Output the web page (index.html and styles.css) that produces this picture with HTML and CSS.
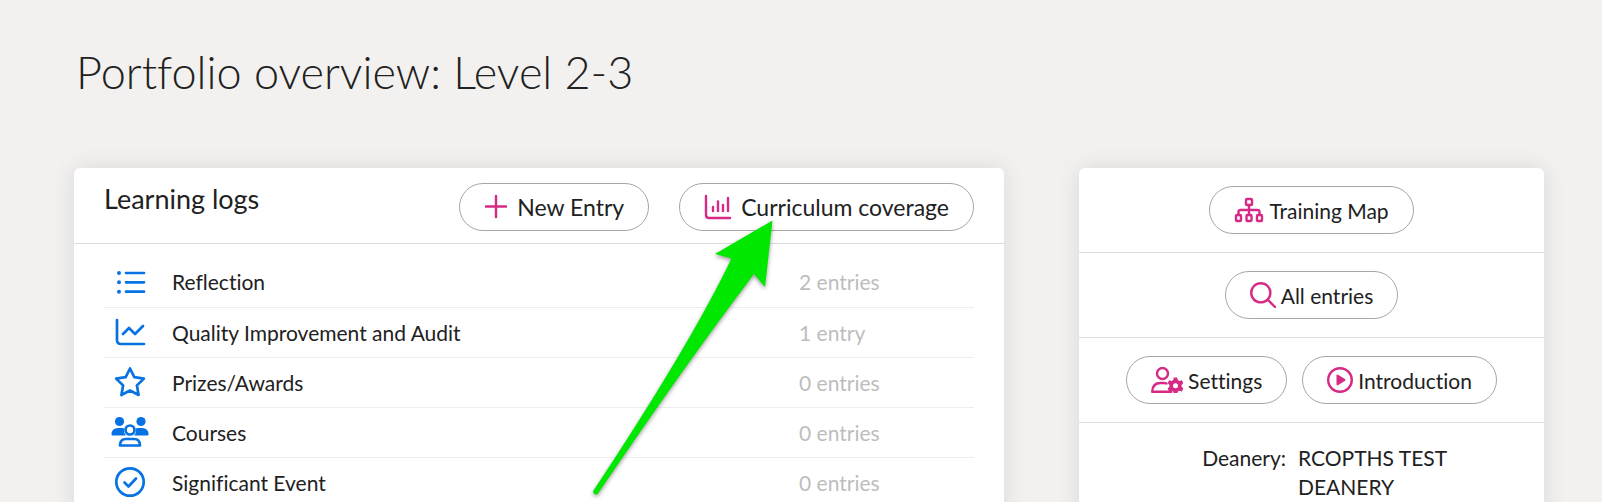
FILE: index.html
```
<!doctype html>
<html lang="en">
<head>
<meta charset="UTF-8">
<meta name="viewport" content="width=device-width, initial-scale=1.0">
<title>Portfolio overview</title>
<link rel="stylesheet" href="styles.css">
</head>
<body>
<div class="page">
<h1>Portfolio overview: Level 2-3</h1>
<div class="columns">
<main class="card">
<div class="card-header">
<h2>Learning logs</h2>
<div class="actions">
<button class="pill pill-wide" type="button">
<svg width="24" height="26" viewBox="0 0 24 26"><path d="M12 2v21M2 12.500h20"/></svg>
New Entry
</button>
<button class="pill pill-wide" type="button">
<svg width="28" height="26" viewBox="0 0 28 26"><path d="M2 2v19q0 3 3 3h21M9 13v4M14 7.500v9.500M19 11v6M24 4v13"/></svg>
Curriculum coverage
</button>
</div>
</div>
<table class="logs">
<tr>
<td class="log-icon"><svg width="36" height="32" viewBox="0 0 36 32"><path d="M14 7h18M14 16.300h18M14 25.700h18"/><path class="dots" d="M7 7h0M7 16.300h0M7 25.700h0"/></svg></td>
<td>Reflection</td>
<td class="log-count">2 entries</td>
</tr>
<tr>
<td class="log-icon"><svg width="36" height="32" viewBox="0 0 36 32"><path d="M5 4v20q0 4 4 4h23M11 18l6-6 6 6 8-8"/></svg></td>
<td>Quality Improvement and Audit</td>
<td class="log-count">1 entry</td>
</tr>
<tr>
<td class="log-icon"><svg width="36" height="32" viewBox="0 0 36 32"><path d="M18 2.500l4.300 8.700 9.600 1.400-7 6.800 1.700 9.600-8.600-4.500-8.600 4.500 1.700-9.600-7-6.800 9.600-1.400z"/></svg></td>
<td>Prizes/Awards</td>
<td class="log-count">0 entries</td>
</tr>
<tr>
<td class="log-icon"><svg width="36" height="32" viewBox="1 0 36 32"><g class="solid"><circle cx="8.500" cy="5.500" r="4.600"/><circle cx="30" cy="5.500" r="4.600"/><path d="M.5 18.500q0-6.500 6.500-6.500h4q1.500 0 2.300.5-1 4 1.700 7H1.500q-1 0-1-1zM37.500 18.500q0-6.500-6.500-6.500h-4q-1.500 0-2.300.5 1 4-1.700 7h13.500q1 0 1-1z"/></g><circle cx="19" cy="14" r="4.500"/><path d="M9 29.500q0-6.500 6-6.500h8q6 0 6 6.500z"/></svg></td>
<td>Courses</td>
<td class="log-count">0 entries</td>
</tr>
<tr>
<td class="log-icon"><svg width="36" height="32" viewBox="0 0 36 32"><circle cx="18" cy="16" r="13.700"/><path d="M12.500 16.500l4 4 7.500-8"/></svg></td>
<td>Significant Event</td>
<td class="log-count">0 entries</td>
</tr>
</table>
<svg class="pointer" width="200" height="290" viewBox="0 0 200 290"><path d="M182.500 5.500L125 39l16.500 4.500Q100 130 3.500 275.500q-1 2.500 1 3.500 2 1 3.500-.5Q95 150 164 59l11 13z"/></svg>
</main>
<aside class="card">
<div class="side-row">
<button class="pill" type="button">
<svg width="30" height="26" viewBox="0 0 30 26"><rect x="12" y="2" width="6" height="6" rx="1"/><rect x="2" y="18" width="5" height="6" rx="1"/><rect x="12.500" y="18" width="5" height="6" rx="1"/><rect x="23" y="18" width="5" height="6" rx="1"/><path d="M15 8v10M4.500 18v-3q0-2 2-2h17q2 0 2 2v3"/></svg>
Training Map
</button>
</div>
<div class="side-row">
<button class="pill" type="button">
<svg width="26" height="26" viewBox="0 0 26 26"><circle cx="10.800" cy="10.800" r="9.600"/><path d="M18 18l7 7"/></svg>
All entries
</button>
</div>
<div class="side-row">
<button class="pill" type="button">
<svg width="32" height="26" viewBox="0 0 32 26"><circle cx="11.500" cy="6.500" r="5.500"/><path d="M15.500 16.500q-1-.5-3-.5h-3q-8 0-8.300 8.800h19"/><g class="solid"><path d="M22.800 10.500h3.400l.6 2.500 1.500.9 2.500-.7 1.600 2.900-1.800 1.800v1.800l1.800 1.800-1.600 2.900-2.500-.7-1.500.9-.6 2.400h-3.400l-.6-2.400-1.500-.9-2.500.7-1.600-2.900 1.800-1.800v-1.800l-1.800-1.800 1.600-2.900 2.500.7 1.500-.9z"/></g><circle class="hole" cx="24.500" cy="18.800" r="2.500"/></svg>
Settings
</button>
<button class="pill" type="button">
<svg width="26" height="26" viewBox="0 0 26 26"><circle cx="13" cy="13" r="11.800"/><path class="solid" d="M9.500 8.500q0-1.500 1.500-.8l7 4.300q1 .9 0 1.800l-7 4.400q-1.500.6-1.500-.9z"/></svg>
Introduction
</button>
</div>
<dl class="details">
<dt>Deanery:</dt>
<dd>RCOPTHS TEST DEANERY</dd>
</dl>
</aside>
</div>
</div>
</body>
</html>
```

FILE: styles.css
```
* {
box-sizing: border-box;
}
body {
margin: 0;
background-color: #f3f1ef;
color: #212121;
font-family: Lato, sans-serif;
font-size: 21px;
line-height: 29px;
font-variant-ligatures: none;
}
.page {
height: 100vh;
overflow: hidden;
padding: 43px 58px 0 74px;
}
h1 {
margin: 0 0 67px 2px;
font-size: 45px;
font-weight: 300;
line-height: 58px;
}
.columns {
display: grid;
grid-template-columns: 2fr 1fr;
gap: 75px;
}
.card {
position: relative;
min-height: 400px;
background-color: #fff;
border-radius: 6px;
box-shadow: 0 0 24px rgba(0, 0, 0, 0.1);
}
.card-header {
display: flex;
justify-content: space-between;
padding: 15px 30px 12px;
border-bottom: 1px solid #dcdcdc;
}
h2 {
margin: 0;
font-size: 27px;
font-weight: 400;
line-height: 32px;
}
.actions {
display: flex;
gap: 30px;
}
.pill {
display: flex;
align-items: center;
gap: 5px;
height: 48px;
padding: 0 24px;
border: 1px solid #a6a6a6;
border-radius: 24px;
background-color: #fff;
color: inherit;
font: inherit;
font-variant-ligatures: none;
white-space: nowrap;
cursor: pointer;
}
.pill-wide {
gap: 9px;
font-size: 23px;
line-height: 27px;
}
svg {
display: block;
fill: none;
stroke: currentColor;
stroke-width: 2.4;
stroke-linecap: round;
stroke-linejoin: round;
}
.pill svg {
color: #d62a86;
}
.solid {
fill: currentColor;
stroke: none;
}
.hole {
fill: #fff;
stroke: none;
}
.logs {
width: calc(100% - 60px);
margin: 13px 30px 0;
border-collapse: collapse;
}
.logs td {
height: 50px;
padding: 0;
border-bottom: 1px solid #eee;
}
.logs .log-icon {
width: 68px;
padding-left: 8px;
color: #0773e2;
}
.log-icon svg {
overflow: visible;
stroke-width: 2.7;
}
.log-icon .dots {
stroke-width: 4;
}
.logs .log-count {
width: 175px;
color: #bdbdbd;
}
.pointer {
position: absolute;
left: 516px;
top: 47px;
filter: drop-shadow(0 2px 2px rgba(0, 0, 0, 0.4));
pointer-events: none;
}
.pointer path {
fill: #00e800;
stroke: none;
}
.side-row {
display: flex;
justify-content: center;
gap: 15px;
padding: 18px 15px;
border-bottom: 1px solid #dcdcdc;
}
.details {
display: grid;
grid-template-columns: 46% 1fr;
gap: 12px;
margin: 0;
padding: 20px 15px 20px 0;
}
.details dt {
text-align: right;
}
.details dd {
margin: 0;
}
```
